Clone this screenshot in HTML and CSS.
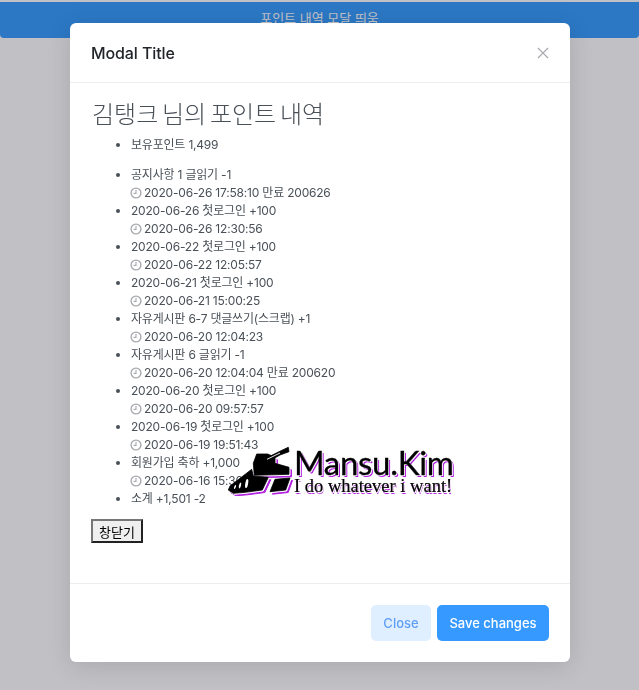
FILE: index.html
```html
<!DOCTYPE html>
<html lang="ko">
<head>
<meta charset="utf-8">
<title>Point history</title>
<link rel="stylesheet" href="styles.css">
</head>
<body>
<div class="page">
  <div class="topbar">포인트 내역 모달 띄움</div>
</div>
<div class="backdrop"></div>
<div class="modal">
  <div class="modal-header">
    <h5 class="modal-title">Modal Title</h5>
    <svg class="close-x" viewBox="0 0 12 12" width="12" height="12"><path d="M1 1 L11 11 M11 1 L1 11" stroke="#a4a6ab" stroke-width="1.2" fill="none"/></svg>
  </div>
  <div class="modal-body">
    <h3 class="heading">김탱크 님의 포인트 내역</h3>
    <ul class="list summary"><li>보유포인트 1,499</li></ul>
    <ul class="list">
      <li>공지사항 1 글읽기 -1<br><span class="clock"><svg viewBox="0 0 12 12" width="12" height="12"><circle cx="6" cy="6" r="4.9" fill="none" stroke="#a9abb1" stroke-width="1.4"/><path d="M6 2.8 V6.4 H3.6" fill="none" stroke="#a9abb1" stroke-width="1.1"/></svg></span>2020-06-26 17:58:10 만료 200626</li>
      <li>2020-06-26 첫로그인 +100<br><span class="clock"><svg viewBox="0 0 12 12" width="12" height="12"><circle cx="6" cy="6" r="4.9" fill="none" stroke="#a9abb1" stroke-width="1.4"/><path d="M6 2.8 V6.4 H3.6" fill="none" stroke="#a9abb1" stroke-width="1.1"/></svg></span>2020-06-26 12:30:56</li>
      <li>2020-06-22 첫로그인 +100<br><span class="clock"><svg viewBox="0 0 12 12" width="12" height="12"><circle cx="6" cy="6" r="4.9" fill="none" stroke="#a9abb1" stroke-width="1.4"/><path d="M6 2.8 V6.4 H3.6" fill="none" stroke="#a9abb1" stroke-width="1.1"/></svg></span>2020-06-22 12:05:57</li>
      <li>2020-06-21 첫로그인 +100<br><span class="clock"><svg viewBox="0 0 12 12" width="12" height="12"><circle cx="6" cy="6" r="4.9" fill="none" stroke="#a9abb1" stroke-width="1.4"/><path d="M6 2.8 V6.4 H3.6" fill="none" stroke="#a9abb1" stroke-width="1.1"/></svg></span>2020-06-21 15:00:25</li>
      <li>자유게시판 6-7 댓글쓰기(스크랩) +1<br><span class="clock"><svg viewBox="0 0 12 12" width="12" height="12"><circle cx="6" cy="6" r="4.9" fill="none" stroke="#a9abb1" stroke-width="1.4"/><path d="M6 2.8 V6.4 H3.6" fill="none" stroke="#a9abb1" stroke-width="1.1"/></svg></span>2020-06-20 12:04:23</li>
      <li>자유게시판 6 글읽기 -1<br><span class="clock"><svg viewBox="0 0 12 12" width="12" height="12"><circle cx="6" cy="6" r="4.9" fill="none" stroke="#a9abb1" stroke-width="1.4"/><path d="M6 2.8 V6.4 H3.6" fill="none" stroke="#a9abb1" stroke-width="1.1"/></svg></span>2020-06-20 12:04:04 만료 200620</li>
      <li>2020-06-20 첫로그인 +100<br><span class="clock"><svg viewBox="0 0 12 12" width="12" height="12"><circle cx="6" cy="6" r="4.9" fill="none" stroke="#a9abb1" stroke-width="1.4"/><path d="M6 2.8 V6.4 H3.6" fill="none" stroke="#a9abb1" stroke-width="1.1"/></svg></span>2020-06-20 09:57:57</li>
      <li>2020-06-19 첫로그인 +100<br><span class="clock"><svg viewBox="0 0 12 12" width="12" height="12"><circle cx="6" cy="6" r="4.9" fill="none" stroke="#a9abb1" stroke-width="1.4"/><path d="M6 2.8 V6.4 H3.6" fill="none" stroke="#a9abb1" stroke-width="1.1"/></svg></span>2020-06-19 19:51:43</li>
      <li>회원가입 축하 +1,000<br><span class="clock"><svg viewBox="0 0 12 12" width="12" height="12"><circle cx="6" cy="6" r="4.9" fill="none" stroke="#a9abb1" stroke-width="1.4"/><path d="M6 2.8 V6.4 H3.6" fill="none" stroke="#a9abb1" stroke-width="1.1"/></svg></span>2020-06-16 15:30:00</li>
      <li>소계 +1,501 -2</li>
    </ul>
    <button class="plain-btn" type="button">창닫기</button>
  </div>
  <div class="modal-footer">
    <button class="btn btn-light" type="button">Close</button>
    <button class="btn btn-primary" type="button">Save changes</button>
  </div>
</div>
<div class="logo">
  <svg class="tank" viewBox="0 0 66 50" width="66" height="50">
    <path fill="#b01ee0" stroke="#b01ee0" stroke-linejoin="round" transform="translate(2.5 2.5)" d="M0.3 44 L2 40 L23.7 23.3 L25.3 30 L40.3 31.3 L34.3 44 L17 46.3 L5.3 47.3 Z M42 45.7 L47 33.3 L62 32 L57.7 44 Z M25.3 17.3 L28.7 8 L39.7 8 L47 11.3 L47 17.3 L61 21.3 L61 28.3 L26.3 29.3 Z"/>
    <path fill="#fff" stroke="#fff" stroke-linejoin="round" transform="translate(1 1)" d="M0.3 44 L2 40 L23.7 23.3 L25.3 30 L40.3 31.3 L34.3 44 L17 46.3 L5.3 47.3 Z M42 45.7 L47 33.3 L62 32 L57.7 44 Z M25.3 17.3 L28.7 8 L39.7 8 L47 11.3 L47 17.3 L61 21.3 L61 28.3 L26.3 29.3 Z"/>
    <path fill="#000" stroke="#000" stroke-width="0.8" stroke-linejoin="round" d="M0.3 44 L2 40 L23.7 23.3 L25.3 30 L40.3 31.3 L34.3 44 L17 46.3 L5.3 47.3 Z M42 45.7 L47 33.3 L62 32 L57.7 44 Z M25.3 17.3 L28.7 8 L39.7 8 L47 11.3 L47 17.3 L61 21.3 L61 28.3 L26.3 29.3 Z M37.7 12.3 L53 4.7 L60.3 1.3 L61 5.7 L52 9 L40 15.7 Z"/>
    <path fill="none" stroke="#fff" stroke-width="0.9" d="M39 13.3 L52 7"/>
    <ellipse cx="18.7" cy="37.5" rx="1.4" ry="4.6" fill="#fff" transform="rotate(10 18.7 37.5)"/>
    <ellipse cx="12" cy="39.5" rx="1" ry="3" fill="#fff" transform="rotate(15 12 39.5)"/>
    <ellipse cx="7" cy="41" rx="0.8" ry="2.2" fill="#fff" transform="rotate(20 7 41)"/>
  </svg>
  <div class="logo-text">
    <div class="logo-name">Mansu.Kim</div>
    <div class="logo-tag">I do whatever i want!</div>
  </div>
</div>
</body>
</html>
```

FILE: styles.css
```css
* { box-sizing: border-box; }
html, body { margin: 0; padding: 0; height: 100%; }
body {
  font-family: "Inter", "Noto Sans CJK KR", sans-serif;
  font-size: 12px;
  color: #495057;
  background: #fff;
  overflow: hidden;
}
.page { padding-top: 2px; }
.topbar {
  height: 36px;
  background: #2c98ff;
  color: #fff;
  border-radius: 0 0 4px 4px;
  text-align: center;
  font-size: 13px;
  line-height: 32px;
}
.backdrop {
  position: fixed;
  inset: 0;
  background: rgba(45, 48, 62, 0.3);
}
.modal {
  position: absolute;
  left: 70px;
  top: 23px;
  width: 500px;
  height: 639px;
  background: #fff;
  border-radius: 6px;
  box-shadow: 0 4px 24px rgba(0, 0, 0, 0.12);
  display: flex;
  flex-direction: column;
}
.modal-header {
  height: 60px;
  padding: 0 21px;
  display: flex;
  align-items: center;
  justify-content: space-between;
  border-bottom: 1px solid #ebedf0;
}
.modal-title {
  margin: 0;
  font-size: 16px;
  font-weight: 500;
  letter-spacing: -0.1px;
  color: #212529;
}
.modal-body {
  flex: 1;
  padding: 17px 21px 0;
  line-height: 18px;
}
.heading {
  margin: 0 0 6px;
  padding-left: 1px;
  font-size: 24px;
  font-weight: 300;
  line-height: 30px;
  word-spacing: -3px;
  color: #495057;
}
.list { margin: 0; padding-left: 40px; letter-spacing: -0.2px; }
.summary { margin-bottom: 12px; }
.clock { display: inline-block; width: 13px; vertical-align: -2px; }
.clock svg { display: block; margin-left: -1px; }
.plain-btn {
  display: block;
  margin-top: 11px;
  width: 52px;
  height: 24px;
  padding: 0;
  background: #efefef;
  border: 2px solid;
  border-color: #767676 #222 #222 #767676;
  font-family: "Noto Sans CJK KR", sans-serif;
  font-size: 13px;
  color: #000;
}
.modal-footer {
  height: 79px;
  padding: 21px 21px 0;
  display: flex;
  justify-content: flex-end;
  gap: 6px;
  border-top: 1px solid #ebedf0;
}
.btn {
  height: 36px;
  border: 0;
  border-radius: 5px;
  font-family: "Inter", sans-serif;
  font-size: 13px;
  font-weight: 500;
  padding: 0;
}
.btn-light { width: 60px; background: #e0efff; color: #5f9ef5; }
.btn-primary { width: 112px; background: #3699ff; color: #fff; }
.logo {
  position: absolute;
  left: 228px;
  top: 446px;
  display: flex;
  align-items: flex-start;
}
.tank { display: block; }
.logo-text { color: #000; }
.logo-name {
  font-family: "Lato", sans-serif;
  font-size: 33px;
  line-height: 32px;
  letter-spacing: -0.3px;
  -webkit-text-stroke: 0.3px #000;
  text-shadow: 1px 1px 0 #fff, 2px 2px 0 #b01ee0;
}
.logo-tag {
  font-family: "Liberation Serif", serif;
  font-size: 18.5px;
  line-height: 16px;
  -webkit-text-stroke: 0.2px #000;
  text-shadow: 1px 1px 0 #fff, 1px 2px 0 #b01ee0;
}
```
